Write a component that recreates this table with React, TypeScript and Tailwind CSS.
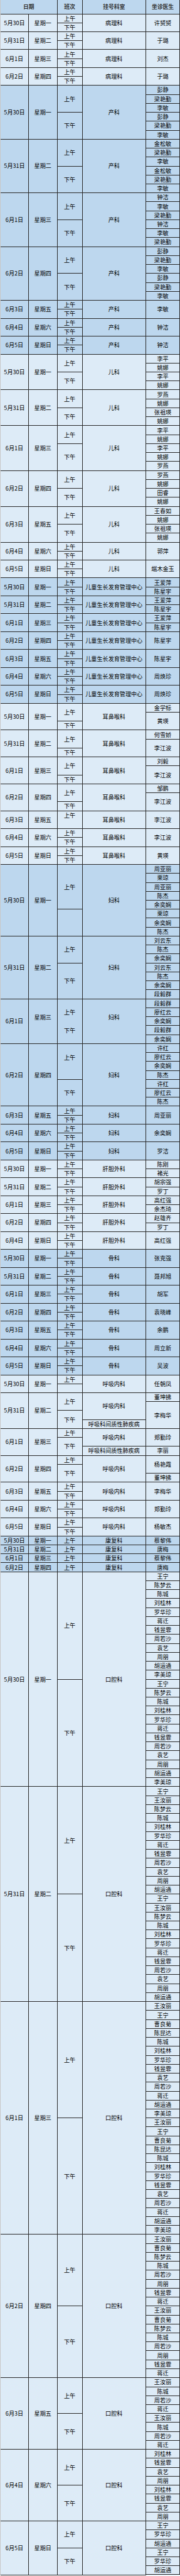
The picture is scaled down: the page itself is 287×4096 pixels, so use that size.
import React from 'react';

// one spreadsheet row, in px
const ROW = 14.24;

type C = { t: string; n: number; tr?: number; nb?: boolean };
type Day = { d: string; w: string; s: C[]; k: C[]; doc: C[]; wtr?: number };
type Section = { mid: boolean; days: Day[] };

const c = (t: string, n = 1, tr?: number, nb?: boolean): C => ({ t, n, tr, nb });
const names = (xs: string[]) => xs.map((x) => c(x));
const half = (a: number, b: number) => [c('上午', a), c('下午', b)];
const AMPM = half(1, 1);

const day = (d: string, w: string, s: C[], k: C[], doc: C[], wtr?: number): Day => ({ d, w, s, k, doc, wtr });
const simple = (d: string, w: string, dept: string, doc: string) => day(d, w, AMPM, [c(dept, 2)], [c(doc, 2)]);
const pair = (d: string, w: string, dept: string, a: string, b: string) => day(d, w, AMPM, [c(dept, 2)], names([a, b]));
const multi = (d: string, w: string, a: number, b: number, dept: string, docs: string[]) =>
  day(d, w, half(a, b), [c(dept, a + b)], names(docs));
const twice = (xs: string[]) => [...xs, ...xs];

const Z = '儿童生长发育管理中心';
const E = '耳鼻喉科';
const F = '妇科';
const G = '肝胆外科';
const H = '呼吸内科';
const HJ = '呼吸科间质性肺疾病';
const K = '口腔科';

const ent = (d: string, w: string, a: string, b: string) => day(d, w, half(2, 1), [c(E, 3)], [c(a), c(b, 2)]);
const rehab = (d: string, w: string, doc: string) => day(d, w, [c('上午')], [c('康复科')], [c(doc)]);

const sections: Section[] = [
  {
    mid: false,
    days: [
      simple('5月30日', '星期一', '病理科', '许赟赟'),
      simple('5月31日', '星期二', '病理科', '于璐'),
      simple('6月1日', '星期三', '病理科', '刘杰'),
      simple('6月2日', '星期四', '病理科', '于璐'),
    ],
  },
  {
    mid: true,
    days: [
      multi('5月30日', '星期一', 3, 3, '产科', ['彭静', '梁艳勤', '李敏', '彭静', '梁艳勤', '李敏']),
      multi('5月31日', '星期二', 3, 3, '产科', ['金松敏', '梁艳勤', '李敏', '金松敏', '梁艳勤', '李敏']),
      multi('6月1日', '星期三', 3, 3, '产科', ['钟洁', '李敏', '梁艳勤', '钟洁', '李敏', '梁艳勤']),
      multi('6月2日', '星期四', 3, 3, '产科', ['彭静', '梁艳勤', '李敏', '彭静', '梁艳勤', '李敏']),
      simple('6月3日', '星期五', '产科', '李敏'),
      simple('6月4日', '星期六', '产科', '钟洁'),
      simple('6月5日', '星期日', '产科', '钟洁'),
    ],
  },
  {
    mid: false,
    days: [
      multi('5月30日', '星期一', 2, 2, '儿科', ['李平', '姚娜', '李平', '姚娜']),
      multi('5月31日', '星期二', 2, 2, '儿科', ['罗燕', '姚娜', '张祖瑛', '姚娜']),
      multi('6月1日', '星期三', 2, 3, '儿科', ['李平', '姚娜', '李平', '姚娜', '罗燕']),
      multi('6月2日', '星期四', 2, 2, '儿科', ['罗燕', '姚娜', '田睿', '姚娜']),
      multi('6月3日', '星期五', 2, 2, '儿科', ['王春如', '姚娜', '张祖瑛', '姚娜']),
      simple('6月4日', '星期六', '儿科', '郭萍'),
      simple('6月5日', '星期日', '儿科', '端木金玉'),
    ],
  },
  {
    mid: true,
    days: [
      pair('5月30日', '星期一', Z, '王爱萍', '陈星宇'),
      pair('5月31日', '星期二', Z, '王爱萍', '陈星宇'),
      pair('6月1日', '星期三', Z, '王爱萍', '陈星宇'),
      simple('6月2日', '星期四', Z, '陈星宇'),
      simple('6月3日', '星期五', Z, '陈星宇'),
      simple('6月4日', '星期六', Z, '周焕珍'),
      simple('6月5日', '星期日', Z, '周焕珍'),
    ],
  },
  {
    mid: false,
    days: [
      ent('5月30日', '星期一', '金学标', '黄瑛'),
      ent('5月31日', '星期二', '何雪娇', '李江波'),
      ent('6月1日', '星期三', '刘毅', '李江波'),
      ent('6月2日', '星期四', '邹鹏', '李江波'),
      day('6月3日', '星期五', [c('上午', 2, 1)], [c(E, 2)], [c('李江波', 2)]),
      simple('6月4日', '星期六', E, '李江波'),
      simple('6月5日', '星期日', E, '黄瑛'),
    ],
  },
  {
    mid: true,
    days: [
      day('5月30日', '星期一', [c('上午', 5), c('', 3)], [c(F, 8)],
        names(['周亚丽', '栗琼', '周亚丽', '陈杰', '余奕娴', '栗琼', '余奕娴', '陈杰'])),
      multi('5月31日', '星期二', 3, 4, F, ['刘云东', '陈杰', '余奕娴', '刘云东', '陈杰', '余奕娴', '段毅群']),
      day('6月1日', '星期三', [c('上午', 3, undefined, true), c('下午', 2, 1)], [c(F, 5, 4)],
        names(['段毅群', '廖红云', '余奕娴', '段毅群', '余奕娴']), 4),
      day('6月2日', '星期四', [c('上午', 4, 3), c('下午', 3)], [c(F, 7)],
        names(['许红', '廖红云', '余奕娴', '陈杰', '许红', '廖红云', '陈杰'])),
      simple('6月3日', '星期五', F, '周亚丽'),
      simple('6月4日', '星期六', F, '余奕娴'),
      simple('6月5日', '星期日', F, '罗洁'),
    ],
  },
  {
    mid: false,
    days: [
      pair('5月30日', '星期一', G, '陈刚', '褚光'),
      pair('5月31日', '星期二', G, '胡宗强', '罗丁'),
      pair('6月1日', '星期三', G, '高红强', '余杰琦'),
      pair('6月2日', '星期四', G, '赵雄齐', '罗丁'),
      simple('6月4日', '星期日', G, '高红强'),
    ],
  },
  {
    mid: true,
    days: [
      simple('5月30日', '星期一', '骨科', '张克强'),
      simple('5月31日', '星期二', '骨科', '聂邦旭'),
      simple('6月1日', '星期三', '骨科', '胡军'),
      simple('6月2日', '星期四', '骨科', '袁晓峰'),
      simple('6月3日', '星期五', '骨科', '余鹏'),
      simple('6月4日', '星期六', '骨科', '周立新'),
      simple('6月5日', '星期日', '骨科', '吴波'),
    ],
  },
  {
    mid: false,
    days: [
      day('5月30日', '星期一', [c('上午'), c('')], [c(H, 2)], [c('任朝凤', 2)]),
      day('5月31日', '星期二', half(2, 2), [c(H, 3), c(HJ)], [c('董坤拂'), c('李梅华', 3)]),
      day('6月1日', '星期三', half(1, 2), [c(H, 2), c(HJ)], [c('郑勤玲', 2), c('李丽')]),
      day('6月2日', '星期四', half(1, 2), [c(H, 3)], [c('杨艳霞', 2), c('董坤拂')]),
      simple('6月3日', '星期五', H, '李梅华'),
      simple('6月4日', '星期六', H, '郑勤玲'),
      simple('6月5日', '星期日', H, '杨敏杰'),
    ],
  },
  {
    mid: true,
    days: [
      rehab('5月30日', '星期一', '蔡黎伟'),
      rehab('5月31日', '星期二', '唐梅'),
      rehab('6月1日', '星期三', '蔡黎伟'),
      rehab('6月2日', '星期四', '唐梅'),
    ],
  },
  {
    mid: false,
    days: [
      multi('5月30日', '星期一', 12, 12, K,
        twice(['王宁', '陈梦云', '陈城', '刘桂林', '罗华珍', '蒋迁', '钱昱霏', '周若沙', '袁艺', '周朋', '胡运通', '李美琼'])),
      multi('5月31日', '星期二', 12, 12, K,
        twice(['王宁', '王汝丽', '陈梦云', '陈城', '刘桂林', '罗华珍', '蒋迁', '钱昱霏', '周若沙', '袁艺', '周朋', '胡运通'])),
      multi('6月1日', '星期三', 13, 13, K,
        twice(['王汝丽', '王宁', '曹良菊', '陈昆达', '陈城', '刘桂林', '罗华珍', '钱昱霏', '袁艺', '周若沙', '蒋迁', '胡运通', '李美琼'])),
      multi('6月2日', '星期四', 8, 8, K, twice(['王汝丽', '曹良菊', '陈梦云', '陈城', '周若沙', '周朋', '钱昱霏', '蒋迁'])),
      multi('6月3日', '星期五', 4, 4, K, twice(['王汝丽', '陈城', '周若沙', '蒋迁'])),
      multi('6月4日', '星期六', 4, 4, K, twice(['刘桂林', '钱昱霏', '袁艺', '周朋'])),
      multi('6月5日', '星期日', 3, 3, K, twice(['王宁', '罗华珍', '胡运通'])),
    ],
  },
];

function Cell({ c, className }: { c: C; className: string }) {
  return (
    <div
      className={`flex shrink-0 justify-center whitespace-nowrap border-r border-[#2a2a2a] ${c.nb ? '' : 'border-b'} ${c.tr ? 'items-start' : 'items-center'} ${className}`}
      style={{ height: c.n * ROW }}
    >
      {c.tr ? (
        <div className="flex items-center" style={{ height: c.tr * ROW }}>
          {c.t}
        </div>
      ) : (
        c.t
      )}
    </div>
  );
}

function DayRow({ day }: { day: Day }) {
  const n = day.s.reduce((a, x) => a + x.n, 0);
  return (
    <div className="flex">
      <Cell c={{ t: day.d, n }} className="w-[45px]" />
      <Cell c={{ t: day.w, n, tr: day.wtr }} className="w-[45.5px]" />
      <div className="flex w-[40px] flex-col">
        {day.s.map((x, i) => (
          <Cell key={i} c={x} className="w-full" />
        ))}
      </div>
      <div className="flex w-[101.5px] flex-col">
        {day.k.map((x, i) => (
          <Cell key={i} c={x} className="w-full" />
        ))}
      </div>
      <div className="flex w-[54px] flex-col">
        {day.doc.map((x, i) => (
          <Cell key={i} c={x} className="w-full" />
        ))}
      </div>
    </div>
  );
}

export default function App() {
  return (
    <div className="w-[287px] border-l border-[#c8c8c8] bg-white font-['Noto_Sans_CJK_SC',sans-serif] text-[9.1px] leading-none text-black">
      {/* header */}
      <div className="flex h-[22.5px] border-b border-[#2a2a2a] bg-[#bdd7ee] text-[8.8px] font-bold text-[#333]">
        <div className="flex w-[90.5px] items-center justify-center border-r border-[#2a2a2a] pt-[1px]">日期</div>
        <div className="flex w-[40px] items-center justify-center border-r border-[#2a2a2a] pt-[1px]">班次</div>
        <div className="flex w-[101.5px] items-center justify-center border-r border-[#2a2a2a] pt-[1px]">挂号科室</div>
        <div className="flex w-[54px] items-center justify-center border-r border-[#2a2a2a] pt-[1px]">坐诊医生</div>
      </div>

      {sections.map((s, i) => (
        <div key={i} className={s.mid ? 'bg-[#bdd7ee]' : 'bg-[#ddebf7]'}>
          {s.days.map((d, j) => (
            <DayRow key={j} day={d} />
          ))}
        </div>
      ))}
    </div>
  );
}
